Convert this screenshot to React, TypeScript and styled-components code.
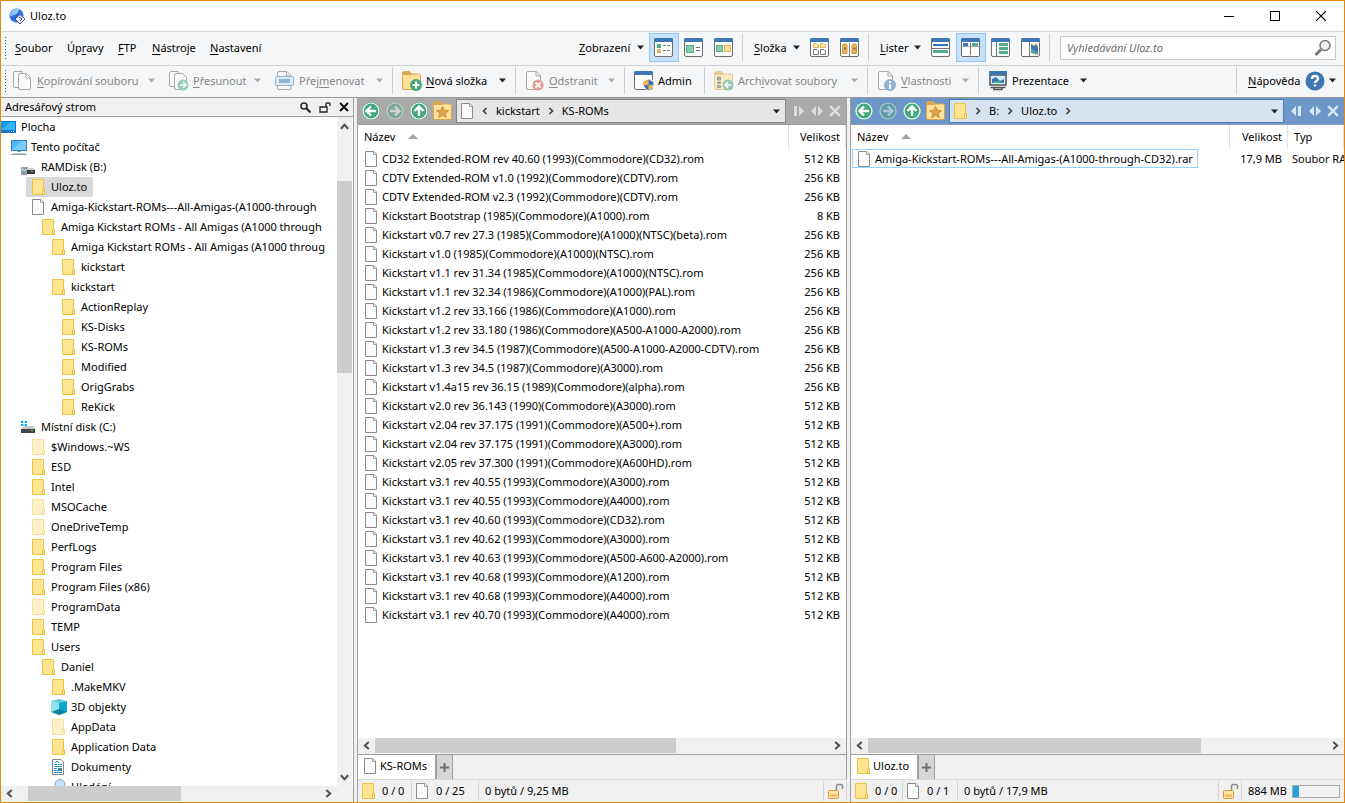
import React from "react";
import styled, { createGlobalStyle, css } from "styled-components";

const Global = createGlobalStyle`
  *, *::before, *::after { box-sizing: border-box; }
  body { margin: 0; background: #f0f0f0; }
  body, button, input, table {
    font-family: "Noto Sans", "Open Sans", sans-serif;
    font-size: 11px;
    line-height: 16px;
    color: #000;
  }
  button {
    border: 0;
    padding: 0;
    margin: 0;
    background: none;
    display: flex;
    align-items: center;
    white-space: nowrap;
    cursor: default;
  }
  svg { display: block; flex: none; }
  u { text-underline-offset: 2px; text-decoration-thickness: 1px; }
`;

/* ---------- frame ---------- */

const Window = styled.div`
  display: flex;
  flex-direction: column;
  height: 100vh;
  border: 1px solid #e08a14;
  background: #f0f0f0;
  overflow: hidden;
`;

const TitleBar = styled.header`
  display: flex;
  flex: none;
  align-items: center;
  height: 31px;
  padding-left: 8px;
  gap: 4px;
  background: #fff;
  border-bottom: 1px solid #d2d3d5;
`;

const Title = styled.h1`
  flex: 1;
  margin: 0;
  font-size: 11px;
  font-weight: 400;
`;

const CaptionButtons = styled.div`
  display: flex;
`;

const CaptionButton = styled.button`
  width: 46px;
  height: 30px;
  justify-content: center;
`;

const Bar = styled.div<{ $line: string; $height: number }>`
  display: flex;
  flex: none;
  align-items: center;
  height: ${(p) => p.$height}px;
  padding-bottom: 2px;
  background: #f5f6f7;
  border-bottom: 1px solid ${(p) => p.$line};
  overflow: hidden;
`;

const Grip = styled.span`
  flex: none;
  width: 1px;
  height: 22px;
  margin: 0 2px 0 4px;
  background: repeating-linear-gradient(#555 0 1px, transparent 1px 3px);
`;

const Spacer = styled.span`
  flex: 1;
`;

const Separator = styled.span`
  flex: none;
  width: 1px;
  height: 27px;
  background: #cfd0d2;
`;

const MenuButton = styled.button<{ $width: number }>`
  width: ${(p) => p.$width}px;
  height: 28px;
  padding-left: 7px;
`;

const DropButton = styled.button<{ $width: number }>`
  width: ${(p) => p.$width}px;
  height: 28px;
  justify-content: space-between;
  padding: 0 4px 0 11px;
`;

const ViewButton = styled.button<{ $on?: boolean }>`
  width: 30px;
  height: 29px;
  padding-left: 4px;
  border: 1px solid ${(p) => (p.$on ? "#92c8f8" : "transparent")};
  background: ${(p) => (p.$on ? "#c9e1f8" : "transparent")};
`;

const ViewGroup = styled.div`
  display: flex;
  margin-right: 3px;
`;

const Search = styled.label`
  display: flex;
  align-items: center;
  width: 276px;
  height: 24px;
  margin: 0 8px 0 10px;
  padding: 0 3px 0 6px;
  background: #fff;
  border: 1px solid #c6c7c9;
`;

const SearchInput = styled.input`
  flex: 1;
  min-width: 0;
  border: 0;
  padding: 0;
  outline: 0;
  background: none;
  &::placeholder { color: #6d6d6d; font-style: italic; opacity: 1; }
`;

const ToolButton = styled.button<{ $width: number; $dim?: boolean; $tight?: boolean }>`
  flex: none;
  width: ${(p) => p.$width}px;
  height: 28px;
  padding-left: ${(p) => (p.$tight ? 5 : 9)}px;
  gap: 4px;
  color: ${(p) => (p.$dim ? "#868686" : "#000")};
  ${(p) => p.$dim && css`svg:first-child { opacity: 0.55; }`}
`;

const HelpButton = styled(ToolButton)`
  padding: 0 7px 0 11px;
`;

const ToolText = styled.span`
  flex: 1;
  text-align: left;
`;

const CaretBox = styled.span`
  width: 16px;
  flex: none;
`;

const Main = styled.main`
  display: flex;
  flex: 1;
  min-height: 0;
`;

/* ---------- directory tree ---------- */

const TreePanel = styled.section`
  display: flex;
  flex-direction: column;
  width: 353px;
  flex: none;
  border-right: 1px solid #a0a0a0;
`;

const TreeHeader = styled.div`
  display: flex;
  flex: none;
  align-items: center;
  height: 19px;
  padding-left: 4px;
  border-bottom: 1px solid #a0a0a0;
`;

const PanelTitle = styled.h2`
  flex: 1;
  margin: 0;
  font-size: 11px;
  font-weight: 400;
`;

const SmallButton = styled.button`
  width: 19px;
  height: 18px;
  justify-content: center;
`;

const TreeBody = styled.div`
  display: flex;
  flex: 1;
  min-height: 0;
  background: #fff;
`;

const TreeList = styled.ul`
  flex: 1;
  min-width: 0;
  margin: 0 1px 0 0;
  padding: 0;
  list-style: none;
  overflow: hidden;
`;

const TreeRow = styled.li<{ $depth: number }>`
  display: flex;
  height: 20px;
  margin-left: ${(p) => p.$depth * 10 - 5}px;
`;

const TreeNode = styled.button<{ $selected?: boolean }>`
  height: 20px;
  gap: 4px;
  padding: 0 6px 0 5px;
  background: ${(p) => (p.$selected ? "#d9d9d9" : "none")};
`;

/* ---------- scroll bars ---------- */

const HScroll = styled.div<{ $corner?: boolean }>`
  display: flex;
  flex: none;
  height: 16px;
  padding-right: ${(p) => (p.$corner ? 16 : 0)}px;
  background: #f0f0f0;
`;

const VScroll = styled.div`
  display: flex;
  flex-direction: column;
  flex: none;
  width: 15px;
  margin-right: 1px;
  background: #f0f0f0;
`;

const ScrollArrow = styled.button<{ $vertical?: boolean }>`
  flex: none;
  width: ${(p) => (p.$vertical ? 15 : 17)}px;
  height: ${(p) => (p.$vertical ? 18 : 15)}px;
  justify-content: center;
`;

const Thumb = styled.span<{ $grow: number; $shown?: boolean }>`
  flex: ${(p) => p.$grow} 1 0;
  background: ${(p) => (p.$shown ? "#cdcdcd" : "none")};
`;

const HThumb = styled(Thumb)`
  height: 15px;
`;

/* ---------- file panels ---------- */

const Lister = styled.section<{ $grow: number }>`
  display: flex;
  flex-direction: column;
  flex: ${(p) => p.$grow} 1 0;
  min-width: 0;
  margin-left: 3px;
  border-left: 1px solid #a0a0a0;
`;

const ListerBody = styled.div<{ $edge?: boolean }>`
  display: flex;
  flex-direction: column;
  flex: 1;
  min-height: 0;
  border-right: ${(p) => (p.$edge ? "1px solid #a0a0a0" : "0")};
`;

const PathBar = styled.nav<{ $active?: boolean }>`
  display: flex;
  flex: none;
  align-items: center;
  height: 27px;
  padding-left: 1px;
  background: ${(p) => (p.$active ? "#6c97c8" : "#a9a9a9")};
  border-bottom: 1px solid ${(p) => (p.$active ? "#8a9db5" : "#9a9a9a")};
`;

const NavButton = styled.button`
  width: 24px;
  height: 24px;
  justify-content: center;
`;

const Crumbs = styled.div<{ $active?: boolean }>`
  display: flex;
  flex: 1;
  min-width: 0;
  align-items: center;
  height: 24px;
  margin-left: 1px;
  padding: 0 4px 0 3px;
  background: ${(p) => (p.$active ? "#d7e3f0" : "#e6e6e6")};
  border: 1px solid ${(p) => (p.$active ? "#4f7db2" : "#858585")};
`;

const Crumb = styled.button<{ $width?: number }>`
  height: 20px;
  padding: 0 2px;
  justify-content: center;
  width: ${(p) => (p.$width ? p.$width + "px" : "auto")};
`;

const EdgeButton = styled.button<{ $width: number }>`
  width: ${(p) => p.$width}px;
  height: 24px;
  justify-content: center;
`;

const TableArea = styled.div`
  flex: 1;
  min-height: 0;
  overflow: hidden;
  background: #fff;
`;

const FileTable = styled.table`
  width: 100%;
  table-layout: fixed;
  border-collapse: separate;
  border-spacing: 0;
`;

const Head = styled.th<{ $width?: number; $end?: boolean }>`
  width: ${(p) => (p.$width ? p.$width + "px" : "auto")};
  height: 24px;
  padding: 0 5px 0 6px;
  font-weight: 400;
  text-align: ${(p) => (p.$end ? "right" : "left")};
  border-right: 1px solid #e2e2e2;
`;

const SortMark = styled.span`
  display: inline-block;
  margin-left: 13px;
  border: 5px solid transparent;
  border-top: 0;
  border-bottom-color: #a3a3a3;
  vertical-align: 2px;
`;

const Cell = styled.td<{ $end?: boolean }>`
  height: 19px;
  padding: ${(p) => (p.$end ? "0 6px 0 0" : "0 0 0 4px")};
  text-align: ${(p) => (p.$end ? "right" : "left")};
  white-space: nowrap;
  overflow: hidden;
`;

const NameCell = styled(Cell)`
  padding: 0 0 0 1px;
`;

const FileName = styled.span<{ $focused?: boolean }>`
  display: inline-flex;
  align-items: center;
  vertical-align: top;
  gap: 2px;
  height: 19px;
  padding: 0 4px;
  border: 1px solid ${(p) => (p.$focused ? "#99d1ff" : "transparent")};
`;

const TabStrip = styled.div`
  display: flex;
  flex: none;
  height: 25px;
  border-top: 1px solid #a0a0a0;
`;

const Tab = styled.button`
  height: 24px;
  padding: 0 8px 2px 5px;
  gap: 1px;
  background: #fff;
`;

const AddTab = styled.button`
  width: 18px;
  height: 24px;
  justify-content: center;
  background: #d5d5d5;
  border-left: 2px solid #a0a0a0;
  border-right: 1px solid #a0a0a0;
`;

const Status = styled.footer`
  display: flex;
  flex: none;
  align-items: center;
  height: 23px;
  border-top: 1px solid #d9d9d9;
`;

const StatusItem = styled.span<{ $width?: number }>`
  display: flex;
  align-items: center;
  height: 20px;
  width: ${(p) => (p.$width ? p.$width + "px" : "auto")};
  flex: ${(p) => (p.$width ? "none" : "1")};
  padding-left: 3px;
  gap: 5px;
  border-right: 1px solid #d2d2d2;
  white-space: nowrap;
`;

const StatusText = styled(StatusItem)`
  padding-left: 6px;
`;

const DiskUse = styled(StatusItem)`
  border-right: 0;
  padding: 0 4px 0 6px;
  justify-content: space-between;
`;

const Gauge = styled.span`
  display: block;
  width: 49px;
  height: 13px;
  border: 1px solid #a9a9a9;
  background: #f2f2f2;
`;

const GaugeFill = styled.span<{ $percent: number }>`
  display: block;
  height: 11px;
  width: ${(p) => p.$percent}%;
  background: #26a0da;
`;

/* ---------- drawings ---------- */

const Caret = ({ dim }: { dim?: boolean }) => (
  <svg width="8" height="5" viewBox="0 0 8 5"><path d="M0 .5h7L3.500 4.500z" fill={dim ? "#6f6f6f" : "#222"} /></svg>
);

const Chevron = ({ dir, size = 8, color = "#505050" }: { dir: "l" | "r" | "u" | "d"; size?: number; color?: string }) => {
  const d = { l: "M6 .8L2.500 4 6 7.200", r: "M2 .8L5.500 4 2 7.200", u: "M.8 6L4 2.500 7.200 6", d: "M.8 2L4 5.500 7.200 2" }[dir];
  return <svg width={size} height={size} viewBox="0 0 8 8"><path d={d} fill="none" stroke={color} strokeWidth="1.800" /></svg>;
};

const CrumbArrow = ({ dir }: { dir: "l" | "r" }) => (
  <svg width="6" height="8" viewBox="0 0 6 8">
    <path d={dir === "l" ? "M4.500 1L1.500 4l3 3" : "M1.500 1l3 3-3 3"} fill="none" stroke="#444" strokeWidth="1.700" />
  </svg>
);

const Folder = ({ pale }: { pale?: boolean }) => (
  <svg width="16" height="16" viewBox="0 0 16 16" opacity={pale ? 0.5 : 1}>
    <path d="M1.500.5h11v10.500h1v4.500h-12z" fill="#ffe591" stroke="#eac543" />
    <path d="M11.500 15.500v-4.500h2v4.500z" fill="#ffe9a3" stroke="#e8bf3a" />
  </svg>
);

const Page = () => (
  <svg width="16" height="16" viewBox="0 0 16 16">
    <path d="M1.500.5h8.500l2.500 2.500v12.500h-11z" fill="#fbfbfb" stroke="#8b8b8b" />
    <path d="M9.500.5v3h3" fill="#e8e8e8" stroke="#a0a0a0" />
  </svg>
);

const Desktop = () => (
  <svg width="16" height="16" viewBox="0 0 16 16">
    <rect x="0" y="2" width="15" height="12" fill="#1177cf" />
    <rect x="0" y="3" width="14" height="8" fill="#0d9bf5" />
    <path d="M0 11L9 3h5v8z" fill="#37b3ff" />
    <path d="M10 12.500h1M12 12.500h1" stroke="#fff" />
  </svg>
);

const Computer = () => (
  <svg width="16" height="16" viewBox="0 0 16 16">
    <rect x=".5" y="1.500" width="15" height="10" fill="#4db8f8" stroke="#3684b5" />
    <path d="M1 11L11 2h4v9z" fill="#7accfb" />
    <path d="M6 12.500h4M2 15h13" stroke="#7f9db0" />
    <path d="M0 15.500h16" stroke="#8aa5b8" />
  </svg>
);

const RamDisk = () => (
  <svg width="16" height="16" viewBox="0 0 16 16">
    <path d="M0 8h7l-1 8H0z" fill="#9c9c9c" />
    <path d="M1 10h4v3H1z" fill="#d7eef5" /><path d="M1 13l3-3M2 14l3-2" stroke="#38819c" />
    <path d="M7 9h6l1 3H6z" fill="#d2d2d2" /><rect x="6" y="11" width="8" height="4" fill="#3d3d3d" />
    <rect x="10" y="12" width="2" height="1" fill="#3fe23f" />
  </svg>
);

const SystemDisk = () => (
  <svg width="16" height="16" viewBox="0 0 16 16">
    <path d="M0 2h2.500v2H0zM3.500 2H6v2H3.500zM0 5h2.500v2H0zM3.500 5H6v2H3.500z" fill="#19aef0" />
    <path d="M3 7h10l1 3H0z" fill="#c9cbcd" /><rect x="0" y="10" width="14" height="4" fill="#434649" />
    <rect x="10" y="11" width="2" height="1" fill="#43e643" />
  </svg>
);

const Cube = () => (
  <svg width="16" height="16" viewBox="0 0 16 16">
    <path d="M0 2l8-2 8 2-8 3z" fill="#64cbd9" /><path d="M0 2l8 2v8l-8 1z" fill="#8fe3ea" />
    <path d="M8 4l8-2v11l-8 3z" fill="#0aa5d2" /><path d="M0 13l8-3v6z" fill="#128a98" /><path d="M8 10l8 3-8 3z" fill="#0784ab" />
  </svg>
);

const Documents = () => (
  <svg width="16" height="16" viewBox="0 0 16 16">
    <path d="M1.500.5h8.500l2.500 2.500v12.500h-11z" fill="#fff" stroke="#858585" />
    <path d="M3 5.500h3M7 5.500h4M3 7.500h8M3 9.500h3M3 11.500h8M3 13.500h8" stroke="#2c8fc4" />
    <path d="M4 4l2-2 2 2" stroke="#2c8fc4" fill="none" /><rect x="7" y="9" width="4" height="2" fill="#3f7f91" />
  </svg>
);

const SearchFolder = () => (
  <svg width="16" height="16" viewBox="0 0 16 16">
    <circle cx="9" cy="5.500" r="5" fill="#c6e3f8" stroke="#8aa2b4" /><path d="M5 9l-4 5" stroke="#777" strokeWidth="2" />
  </svg>
);

const AppLogo = () => (
  <svg width="17" height="17" viewBox="0 0 17 17">
    <circle cx="7.500" cy="7.500" r="7" fill="#2f7ae0" />
    <path d="M1 8a7 7 0 0 1 9-7C11 5 6 7 1 8z" fill="#8fc3fb" />
    <path d="M2 11c3 0 7-3 8-8" stroke="#1a51b4" fill="none" />
    <path d="M11 6.500l5 4.500-5 5-5-5z" fill="#eef1fb" stroke="#3c4a95" />
    <path d="M10 9l3 2-2 2" stroke="#3c4a95" fill="none" />
  </svg>
);

/* Window-shaped icon with a blue caption; children fill its body. */
const Pane = ({ children }: { children?: React.ReactNode }) => (
  <svg width="19" height="19" viewBox="0 0 19 19">
    <rect x=".5" y=".5" width="18" height="18" rx="1.500" fill="#fff" stroke="#6c6c6c" />
    <path d="M0 1.500Q0 0 1.500 0h16Q19 0 19 1.500V4H0z" fill="#3c77b3" />
    {children}
  </svg>
);

const G = "#4fae86";
const Y = "#eab257";
const B = "#3c77b3";
const K = "#777";

const ViewList = () => (
  <Pane><rect x="3" y="6" width="4" height="4" fill={G} /><rect x="3" y="11" width="4" height="4" fill={Y} />
    <path d="M9 7.500h3M13 7.500h3M9 12.500h3M13 12.500h3" stroke={K} /></Pane>
);
const ViewTile = () => (
  <Pane><rect x="2.500" y="7.500" width="7" height="7" fill="#8ccdb0" stroke={G} /><path d="M12 9.500h4M12 12.500h4" stroke={K} /></Pane>
);
const ViewThumbs = () => (
  <Pane><rect x="2.500" y="7.500" width="6" height="6" fill="#8ccdb0" stroke={G} /><rect x="10.500" y="7.500" width="6" height="6" fill="#ffe19b" stroke={Y} /></Pane>
);
const FolderMix = () => (
  <Pane><path d="M3.500 9.500v-4H6l1 1h1.500v3zM10.500 9.500v-4H13l1 1h1.500v3z" fill="#ffe7ae" stroke={Y} />
    <path d="M3.500 16.500v-5H7L8.500 13v3.500zM10.500 16.500v-5H14l1.500 1.500v3.500z" fill="#fff" stroke={K} /></Pane>
);
const FolderLock = () => (
  <Pane>
    <path d="M2.500 15.500V7.500q0-1.500 1.500-1.500h1.500q1.500 0 1.500 1.500v8zM12 15.500V7.500q0-1.500 1.500-1.500H15q1.500 0 1.500 1.500v8z" fill={Y} stroke="#cf9640" />
    <path d="M5 9.500v2M14.500 9.500v2" stroke="#7d5a20" strokeWidth="1.500" /><path d="M9.500 5v13" stroke={K} />
  </Pane>
);
const ListerRows = () => (
  <Pane><path d="M2 7h15" stroke={B} strokeWidth="2" /><path d="M1 10.500h17" stroke={K} /><path d="M2 13.500h15" stroke={G} strokeWidth="3" /></Pane>
);
const ListerDual = () => (
  <Pane><path d="M2 6.500h5" stroke={B} strokeWidth="3" /><path d="M11 6.500h6" stroke={G} strokeWidth="3" /><path d="M9.500 5v12" stroke={K} /><path d="M1 8.500h17" stroke="#a5a5a5" /></Pane>
);
const ListerTree = () => (
  <Pane><path d="M5.500 4v14" stroke={K} /><path d="M8 6.500h9M8 10.500h9M8 14.500h9" stroke={G} strokeWidth="3" /></Pane>
);
const ListerPreview = () => (
  <Pane><path d="M8.500 4v14" stroke={K} /><path d="M10 5h7v6h-7z" fill="#ffe6ac" /><path d="M10 6l3 2 2-2 2 3v7l-7-5z" fill={B} /><path d="M10 11l7 5v1l-7-2z" fill={G} /></Pane>
);

const Copy = () => (
  <svg width="20" height="20" viewBox="0 0 20 20" fill="#fff" stroke="#666">
    <path d="M.5 2Q.5.500 2 .5h7v16H2Q.5 16.500.5 15z" />
    <path d="M5.500 4q0-1.500 1.500-1.500h6.500l4 4V17q0 1.500-1.500 1.500H7q-1.500 0-1.500-1.500z" /><path d="M13 3v4h4" fill="none" />
  </svg>
);
const Move = () => (
  <svg width="20" height="20" viewBox="0 0 20 20" fill="#fff" stroke="#666">
    <path d="M.5 2q0-1.500 1.500-1.500h7v15H2q-1.500 0-1.500-1.500z" />
    <path d="M5.500 4q0-1.500 1.500-1.500h6.500l4 4V17q0 1.500-1.500 1.500H7q-1.500 0-1.500-1.500z" />
    <circle cx="14" cy="14" r="5.500" fill="#46a77b" stroke="none" /><path d="M11 14h5M14 11l3 3-3 3" stroke="#fff" fill="none" strokeWidth="1.500" />
  </svg>
);
const Rename = () => (
  <svg width="20" height="20" viewBox="0 0 20 20">
    <path d="M2.500 6V2Q2.500.5 4 .5h8l4 4V6M2.500 14v3q0 1.500 1.500 1.500h10.500q1.500 0 1.500-1.500v-3M11.500 1v4h4" fill="#fff" stroke="#666" />
    <rect x=".5" y="5.500" width="18" height="9" rx="1" fill="#c8e2f6" stroke="#4480bb" /><rect x="4" y="8" width="11" height="4" fill="#4480bb" />
  </svg>
);
const BigFolder = ({ children }: { children?: React.ReactNode }) => (
  <svg width="20" height="20" viewBox="0 0 20 20">
    <path d="M.5 2.500Q.5.500 2.500.5h5L9 3h8.500q1 0 1 1v13q0 1.500-1.500 1.500H2Q.5 18.500.5 17z" fill="#ffe19a" stroke="#dca64e" />
    <path d="M.5 4V2.500Q.5.500 2.500.5h5L9.500 4z" fill="#dca64e" />
    {children}
  </svg>
);
const NewFolder = () => (
  <BigFolder><circle cx="14" cy="14" r="6" fill="#46a77b" /><path d="M14 10.500v7M10.500 14h7" stroke="#fff" strokeWidth="2" /></BigFolder>
);
const StarFolder = () => (
  <BigFolder><path d="M9.500 5.500l1.700 3.800 4.300.4-3.300 2.700 1.100 4.100-3.800-2.200-3.800 2.200 1.100-4.100-3.300-2.700 4.300-.4z" fill="#e0a24a" stroke="#b9822f" strokeWidth=".8" /></BigFolder>
);
const ArchiveFolder = () => (
  <BigFolder><path d="M3.500 6h3v3h-3zM3.500 11h3v1.500h-3zM3.500 14.500h3v2h-3z" fill="#888" stroke="#555" /><circle cx="14" cy="14" r="5.500" fill="#46a77b" />
    <path d="M17 14h-5M14 11l-3 3 3 3" stroke="#fff" strokeWidth="1.500" fill="none" /></BigFolder>
);
const BigPage = ({ children }: { children?: React.ReactNode }) => (
  <svg width="20" height="20" viewBox="0 0 20 20">
    <path d="M1.500 2Q1.500.5 3 .5h8.500l4 4V17q0 1.500-1.500 1.500H3q-1.500 0-1.500-1.500zM11 1v4h4" fill="#fff" stroke="#666" />
    {children}
  </svg>
);
const Delete = () => (
  <BigPage><circle cx="13" cy="14" r="5.500" fill="#d75243" /><path d="M10.500 11.500l5 5M15.500 11.500l-5 5" stroke="#fff" strokeWidth="2" /></BigPage>
);
const Info = () => (
  <BigPage><circle cx="13" cy="14" r="6" fill="#417dba" /><path d="M13 10v2M13 13v5" stroke="#fff" strokeWidth="2" /></BigPage>
);
const Admin = () => (
  <svg width="20" height="20" viewBox="0 0 20 20">
    <rect x=".5" y=".5" width="18" height="18" rx="1.500" fill="#fff" stroke="#6c6c6c" />
    <path d="M0 1.500Q0 0 1.500 0h16Q19 0 19 1.500V4H0z" fill={B} />
    <path d="M14.500 7l5.500 3v4q-1 4.500-5.500 6-4.500-1.500-5.500-6v-4z" fill="#f5f6f7" />
    <path d="M14.500 8.500l5 2.500q0 6.500-5 8.500-5-2-5-8.500z" fill={B} />
    <path d="M14.500 8.500v5.500H9.500v-3zM14.500 14h5q-1 4-5 5.500z" fill="#f0b04c" />
  </svg>
);
const Slides = () => (
  <svg width="20" height="20" viewBox="0 0 20 20">
    <path d="M2 4h16v10H2z" fill="#d3effb" stroke="#555" strokeWidth="1.500" /><path d="M4 12V8l4-2 4 4 4-2v4z" fill={B} /><path d="M4 12l4-2 8 2z" fill={G} />
    <rect x="1" y="0" width="18" height="4" fill={B} /><path d="M2.500 16.500h15M6 16v2.500h8V16" stroke="#555" strokeWidth="1.500" fill="none" />
  </svg>
);
const Help = () => (
  <svg width="20" height="20" viewBox="0 0 20 20">
    <circle cx="10" cy="10" r="9.500" fill={B} />
    <path d="M7 8q0-3 3-3t3 2.500q0 1.500-1.500 2.500-1.500.8-1.500 2M10 13.500v2" fill="none" stroke="#fff" strokeWidth="2.400" />
  </svg>
);
const Magnifier = () => (
  <svg width="18" height="18" viewBox="0 0 18 18">
    <circle cx="11" cy="6.500" r="5" fill="#eef1f3" stroke="#777" strokeWidth="1.500" /><path d="M7 10.500L1.500 16" stroke="#777" strokeWidth="3" />
  </svg>
);
const NavArrow = ({ dir, dim }: { dir: "left" | "right" | "up"; dim?: boolean }) => (
  <svg width="20" height="20" viewBox="0 0 20 20" opacity={dim ? 0.45 : 1}>
    <circle cx="10" cy="10" r="9" fill="#46a97d" /><circle cx="10" cy="10" r="8" fill="#46a97d" stroke="#fff" strokeWidth="1.200" />
    <path d="M15 10H6.500M10 5.500L5.500 10l4.500 4.500" fill="none" stroke="#fff" strokeWidth="2.400"
      transform={`rotate(${dir === "left" ? 0 : dir === "up" ? 90 : 180} 10 10)`} />
  </svg>
);
const Padlock = () => (
  <svg width="17" height="17" viewBox="0 0 17 17">
    <path d="M9.500 7V3.500q0-2 2-2h2q2 0 2 2V6" fill="none" stroke="#8b8b8b" strokeWidth="1.500" />
    <rect x="1.500" y="7.500" width="10" height="8" rx="1" fill="#ffe0a0" stroke="#d69c42" /><path d="M3 12.500h7" stroke="#e9b45e" strokeWidth="2" />
  </svg>
);
const Cross = ({ color, size }: { color: string; size: number }) => (
  <svg width={size} height={size} viewBox="0 0 10 10"><path d="M1 1l8 8M9 1L1 9" stroke={color} strokeWidth="2" /></svg>
);
const Plus = () => (
  <svg width="9" height="9" viewBox="0 0 9 9"><path d="M4.500 0v9M0 4.500h9" stroke="#707070" strokeWidth="2" /></svg>
);

/* ---------- data ---------- */

const Hotkey = ({ text }: { text: string }) => {
  const [before, after] = text.split("&");
  return <span>{after === undefined ? text : <>{before}<u>{after[0]}</u>{after.slice(1)}</>}</span>;
};

const menus: [string, number][] = [["&Soubor", 52], ["Úp&ravy", 51], ["&FTP", 34], ["&Nástroje", 58], ["&Nastavení", 70]];

type NodeIcon = () => React.ReactElement;
const YellowFolder = () => <Folder />;
const PaleFolder = () => <Folder pale />;

const tree: [number, string, NodeIcon][] = [
  [0, "Plocha", Desktop], [1, "Tento počítač", Computer], [2, "RAMDisk (B:)", RamDisk], [3, "Uloz.to", YellowFolder],
  [3, "Amiga-Kickstart-ROMs---All-Amigas-(A1000-through", Page],
  [4, "Amiga Kickstart ROMs - All Amigas (A1000 through", YellowFolder],
  [5, "Amiga Kickstart ROMs - All Amigas (A1000 throug", YellowFolder],
  [6, "kickstart", YellowFolder], [5, "kickstart", YellowFolder], [6, "ActionReplay", YellowFolder], [6, "KS-Disks", YellowFolder],
  [6, "KS-ROMs", YellowFolder], [6, "Modified", YellowFolder], [6, "OrigGrabs", YellowFolder], [6, "ReKick", YellowFolder],
  [2, "Místní disk (C:)", SystemDisk], [3, "$Windows.~WS", PaleFolder], [3, "ESD", YellowFolder], [3, "Intel", YellowFolder],
  [3, "MSOCache", PaleFolder], [3, "OneDriveTemp", PaleFolder], [3, "PerfLogs", YellowFolder], [3, "Program Files", YellowFolder],
  [3, "Program Files (x86)", YellowFolder], [3, "ProgramData", PaleFolder], [3, "TEMP", YellowFolder], [3, "Users", YellowFolder],
  [4, "Daniel", YellowFolder], [5, ".MakeMKV", YellowFolder], [5, "3D objekty", Cube], [5, "AppData", PaleFolder],
  [5, "Application Data", YellowFolder], [5, "Dokumenty", Documents], [5, "Hledání", SearchFolder],
];

const roms: [string, string][] = [
  ["CD32 Extended-ROM rev 40.60 (1993)(Commodore)(CD32).rom", "512 KB"],
  ["CDTV Extended-ROM v1.0 (1992)(Commodore)(CDTV).rom", "256 KB"],
  ["CDTV Extended-ROM v2.3 (1992)(Commodore)(CDTV).rom", "256 KB"],
  ["Kickstart Bootstrap (1985)(Commodore)(A1000).rom", "8 KB"],
  ["Kickstart v0.7 rev 27.3 (1985)(Commodore)(A1000)(NTSC)(beta).rom", "256 KB"],
  ["Kickstart v1.0 (1985)(Commodore)(A1000)(NTSC).rom", "256 KB"],
  ["Kickstart v1.1 rev 31.34 (1985)(Commodore)(A1000)(NTSC).rom", "256 KB"],
  ["Kickstart v1.1 rev 32.34 (1986)(Commodore)(A1000)(PAL).rom", "256 KB"],
  ["Kickstart v1.2 rev 33.166 (1986)(Commodore)(A1000).rom", "256 KB"],
  ["Kickstart v1.2 rev 33.180 (1986)(Commodore)(A500-A1000-A2000).rom", "256 KB"],
  ["Kickstart v1.3 rev 34.5 (1987)(Commodore)(A500-A1000-A2000-CDTV).rom", "256 KB"],
  ["Kickstart v1.3 rev 34.5 (1987)(Commodore)(A3000).rom", "256 KB"],
  ["Kickstart v1.4a15 rev 36.15 (1989)(Commodore)(alpha).rom", "256 KB"],
  ["Kickstart v2.0 rev 36.143 (1990)(Commodore)(A3000).rom", "512 KB"],
  ["Kickstart v2.04 rev 37.175 (1991)(Commodore)(A500+).rom", "512 KB"],
  ["Kickstart v2.04 rev 37.175 (1991)(Commodore)(A3000).rom", "512 KB"],
  ["Kickstart v2.05 rev 37.300 (1991)(Commodore)(A600HD).rom", "512 KB"],
  ["Kickstart v3.1 rev 40.55 (1993)(Commodore)(A3000).rom", "512 KB"],
  ["Kickstart v3.1 rev 40.55 (1993)(Commodore)(A4000).rom", "512 KB"],
  ["Kickstart v3.1 rev 40.60 (1993)(Commodore)(CD32).rom", "512 KB"],
  ["Kickstart v3.1 rev 40.62 (1993)(Commodore)(A3000).rom", "512 KB"],
  ["Kickstart v3.1 rev 40.63 (1993)(Commodore)(A500-A600-A2000).rom", "512 KB"],
  ["Kickstart v3.1 rev 40.68 (1993)(Commodore)(A1200).rom", "512 KB"],
  ["Kickstart v3.1 rev 40.68 (1993)(Commodore)(A4000).rom", "512 KB"],
  ["Kickstart v3.1 rev 40.70 (1993)(Commodore)(A4000).rom", "512 KB"],
];

type ToolProps = { label: string; icon: React.ReactNode; width: number; dim?: boolean; drop?: boolean; tight?: boolean };

const Tool = ({ label, icon, width, dim, drop, tight }: ToolProps) => (
  <ToolButton $width={width} $dim={dim} $tight={tight} disabled={dim}>
    {icon}<ToolText><Hotkey text={label} /></ToolText>{drop && <CaretBox><Caret dim={dim} /></CaretBox>}
  </ToolButton>
);

const NavButtons = () => (
  <>
    <NavButton aria-label="Zpět"><NavArrow dir="left" /></NavButton>
    <NavButton aria-label="Vpřed"><NavArrow dir="right" dim /></NavButton>
    <NavButton aria-label="Nahoru"><NavArrow dir="up" /></NavButton>
    <NavButton aria-label="Oblíbené"><StarFolder /></NavButton>
  </>
);

const EdgeButtons = ({ flip, color }: { flip?: boolean; color: string }) => (
  <>
    <EdgeButton $width={24} aria-label="Rozbalit">
      <svg width="11" height="10" viewBox="0 0 11 10">
        <path d={flip ? "M5 0v10L0 5zM7 0h3v10H7z" : "M1 0h3v10H1zM6 0v10l5-5z"} fill={color} />
      </svg>
    </EdgeButton>
    <EdgeButton $width={14} aria-label="Prohodit">
      <svg width="12" height="10" viewBox="0 0 12 10"><path d="M5 0v10L0 5zM7 0v10l5-5z" fill={color} /></svg>
    </EdgeButton>
    <EdgeButton $width={22} aria-label="Zavřít panel"><Cross color={color} size={12} /></EdgeButton>
  </>
);

const HBar = ({ before, thumb, after, corner }: { before: number; thumb: number; after: number; corner?: boolean }) => (
  <HScroll $corner={corner}>
    <ScrollArrow aria-label="Posunout vlevo"><Chevron dir="l" size={9} /></ScrollArrow>
    {before > 0 && <HThumb $grow={before} />}
    <HThumb $grow={thumb} $shown />
    <HThumb $grow={after} />
    <ScrollArrow aria-label="Posunout vpravo"><Chevron dir="r" size={9} /></ScrollArrow>
  </HScroll>
);

export default function App() {
  return (
    <Window>
      <Global />
      <TitleBar>
        <AppLogo />
        <Title>Uloz.to</Title>
        <CaptionButtons>
          <CaptionButton aria-label="Minimalizovat"><svg width="10" height="10"><path d="M0 5.500h10" stroke="#000" /></svg></CaptionButton>
          <CaptionButton aria-label="Maximalizovat"><svg width="10" height="10"><rect x=".5" y=".5" width="9" height="9" fill="none" stroke="#000" /></svg></CaptionButton>
          <CaptionButton aria-label="Zavřít"><svg width="10" height="10"><path d="M0 0l10 10M10 0L0 10" stroke="#000" strokeWidth="1.200" /></svg></CaptionButton>
        </CaptionButtons>
      </TitleBar>

      <Bar $height={34} $line="#d2d3d5">
        <Grip />
        {menus.map(([label, width]) => <MenuButton key={label} $width={width}><Hotkey text={label} /></MenuButton>)}
        <Spacer />
        <DropButton $width={81}><Hotkey text="&Zobrazení" /><Caret /></DropButton>
        <ViewGroup>
          <ViewButton $on aria-label="Podrobnosti"><ViewList /></ViewButton>
          <ViewButton aria-label="Dlaždice"><ViewTile /></ViewButton>
          <ViewButton aria-label="Miniatury"><ViewThumbs /></ViewButton>
        </ViewGroup>
        <Separator />
        <DropButton $width={62}><Hotkey text="&Složka" /><Caret /></DropButton>
        <ViewGroup>
          <ViewButton aria-label="Míchat složky"><FolderMix /></ViewButton>
          <ViewButton aria-label="Zamknout formát"><FolderLock /></ViewButton>
        </ViewGroup>
        <Separator />
        <DropButton $width={57}><Hotkey text="&Lister" /><Caret /></DropButton>
        <ViewGroup>
          <ViewButton aria-label="Vodorovně"><ListerRows /></ViewButton>
          <ViewButton $on aria-label="Svisle"><ListerDual /></ViewButton>
          <ViewButton aria-label="Strom"><ListerTree /></ViewButton>
          <ViewButton aria-label="Náhled"><ListerPreview /></ViewButton>
        </ViewGroup>
        <Separator />
        <Search>
          <SearchInput type="search" aria-label="Vyhledávání" placeholder="Vyhledávání Uloz.to" />
          <Magnifier />
        </Search>
      </Bar>

      <Bar $height={32} $line="#9a9a9a">
        <Grip />
        <Tool dim drop tight width={156} label="&Kopírování souboru" icon={<Copy />} />
        <Tool dim drop tight width={106} label="&Přesunout" icon={<Move />} />
        <Tool dim drop tight width={122} label="Přej&menovat" icon={<Rename />} />
        <Separator />
        <Tool drop width={122} label="&Nová složka" icon={<NewFolder />} />
        <Separator />
        <Tool dim drop width={108} label="&Odstranit" icon={<Delete />} />
        <Separator />
        <Tool width={79} label="Admin" icon={<Admin />} />
        <Separator />
        <Tool dim drop width={162} label="Arch&ivovat soubory" icon={<ArchiveFolder />} />
        <Separator />
        <Tool dim drop width={110} label="&Vlastnosti" icon={<Info />} />
        <Separator />
        <Tool drop width={117} label="Prezentace" icon={<Slides />} />
        <Spacer />
        <Separator />
        <HelpButton $width={107}><ToolText><Hotkey text="&Nápověda" /></ToolText><Help /><Caret /></HelpButton>
      </Bar>

      <Main>
        <TreePanel>
          <TreeHeader>
            <PanelTitle>Adresářový strom</PanelTitle>
            <SmallButton aria-label="Hledat">
              <svg width="11" height="11" viewBox="0 0 11 11"><circle cx="4" cy="4" r="3" fill="none" stroke="#222" strokeWidth="1.500" /><path d="M6 6l4.500 4.500" stroke="#222" strokeWidth="2" /></svg>
            </SmallButton>
            <SmallButton aria-label="Zamknout">
              <svg width="12" height="11" viewBox="0 0 12 11"><path d="M1 5h7v5H1zM7 5V2q0-1 1-1h2q1 0 1 1v2" fill="none" stroke="#222" strokeWidth="1.300" /></svg>
            </SmallButton>
            <SmallButton aria-label="Zavřít strom"><Cross color="#111" size={10} /></SmallButton>
          </TreeHeader>
          <TreeBody>
            <TreeList>
              {tree.map(([depth, name, Icon], i) => (
                <TreeRow key={i} $depth={depth}>
                  <TreeNode $selected={name === "Uloz.to"}><Icon />{name}</TreeNode>
                </TreeRow>
              ))}
            </TreeList>
            <VScroll>
              <ScrollArrow $vertical aria-label="Posunout nahoru"><Chevron dir="u" size={9} /></ScrollArrow>
              <Thumb $grow={46} /><Thumb $grow={192} $shown /><Thumb $grow={396} />
              <ScrollArrow $vertical aria-label="Posunout dolů"><Chevron dir="d" size={9} /></ScrollArrow>
            </VScroll>
          </TreeBody>
          <HBar corner before={10} thumb={153} after={139} />
        </TreePanel>

        <Lister $grow={490}>
          <ListerBody $edge>
            <PathBar aria-label="Cesta">
              <NavButtons />
              <Crumbs>
                <Page />
                <Crumb $width={18}><CrumbArrow dir="l" /></Crumb>
                <Crumb>kickstart</Crumb>
                <Crumb $width={18}><CrumbArrow dir="r" /></Crumb>
                <Crumb>KS-ROMs</Crumb>
                <Spacer /><Caret />
              </Crumbs>
              <EdgeButtons color="#dedede" />
            </PathBar>
            <TableArea>
              <FileTable>
                <thead><tr><Head>Název<SortMark /></Head><Head $width={57} $end>Velikost</Head></tr></thead>
                <tbody>
                  {roms.map(([name, size]) => (
                    <tr key={name}><NameCell><FileName><Page />{name}</FileName></NameCell><Cell $end>{size}</Cell></tr>
                  ))}
                </tbody>
              </FileTable>
            </TableArea>
            <HBar before={0} thumb={301} after={153} />
            <TabStrip>
              <Tab><Page />KS-ROMs</Tab>
              <AddTab aria-label="Nová karta"><Plus /></AddTab>
            </TabStrip>
          </ListerBody>
          <Status>
            <StatusItem $width={54}><Folder />0 / 0</StatusItem>
            <StatusItem $width={67}><Page />0 / 25</StatusItem>
            <StatusText>0 bytů / 9,25 MB</StatusText>
            <StatusItem $width={23}><Padlock /></StatusItem>
          </Status>
        </Lister>

        <Lister $grow={494}>
          <ListerBody>
            <PathBar $active aria-label="Cesta">
              <NavButtons />
              <Crumbs $active>
                <Folder />
                <Crumb $width={18}><CrumbArrow dir="r" /></Crumb>
                <Crumb>B:</Crumb>
                <Crumb $width={18}><CrumbArrow dir="r" /></Crumb>
                <Crumb>Uloz.to</Crumb>
                <Crumb $width={18}><CrumbArrow dir="r" /></Crumb>
                <Spacer /><Caret />
              </Crumbs>
              <EdgeButtons flip color="#d7e6f5" />
            </PathBar>
            <TableArea>
              <FileTable>
                <thead><tr><Head>Název<SortMark /></Head><Head $width={58} $end>Velikost</Head><Head $width={56}>Typ</Head></tr></thead>
                <tbody>
                  <tr>
                    <NameCell><FileName $focused><Page />Amiga-Kickstart-ROMs---All-Amigas-(A1000-through-CD32).rar</FileName></NameCell>
                    <Cell $end>17,9 MB</Cell>
                    <Cell>Soubor RAR</Cell>
                  </tr>
                </tbody>
              </FileTable>
            </TableArea>
            <HBar before={0} thumb={333} after={126} />
            <TabStrip>
              <Tab><Folder />Uloz.to</Tab>
              <AddTab aria-label="Nová karta"><Plus /></AddTab>
            </TabStrip>
          </ListerBody>
          <Status>
            <StatusItem $width={52}><Folder />0 / 0</StatusItem>
            <StatusItem $width={55}><Page />0 / 1</StatusItem>
            <StatusText>0 bytů / 17,9 MB</StatusText>
            <StatusItem $width={23}><Padlock /></StatusItem>
            <DiskUse $width={102}>884 MB<Gauge role="meter" aria-label="Využití disku" aria-valuenow={12}><GaugeFill $percent={13} /></Gauge></DiskUse>
          </Status>
        </Lister>
      </Main>
    </Window>
  );
}
